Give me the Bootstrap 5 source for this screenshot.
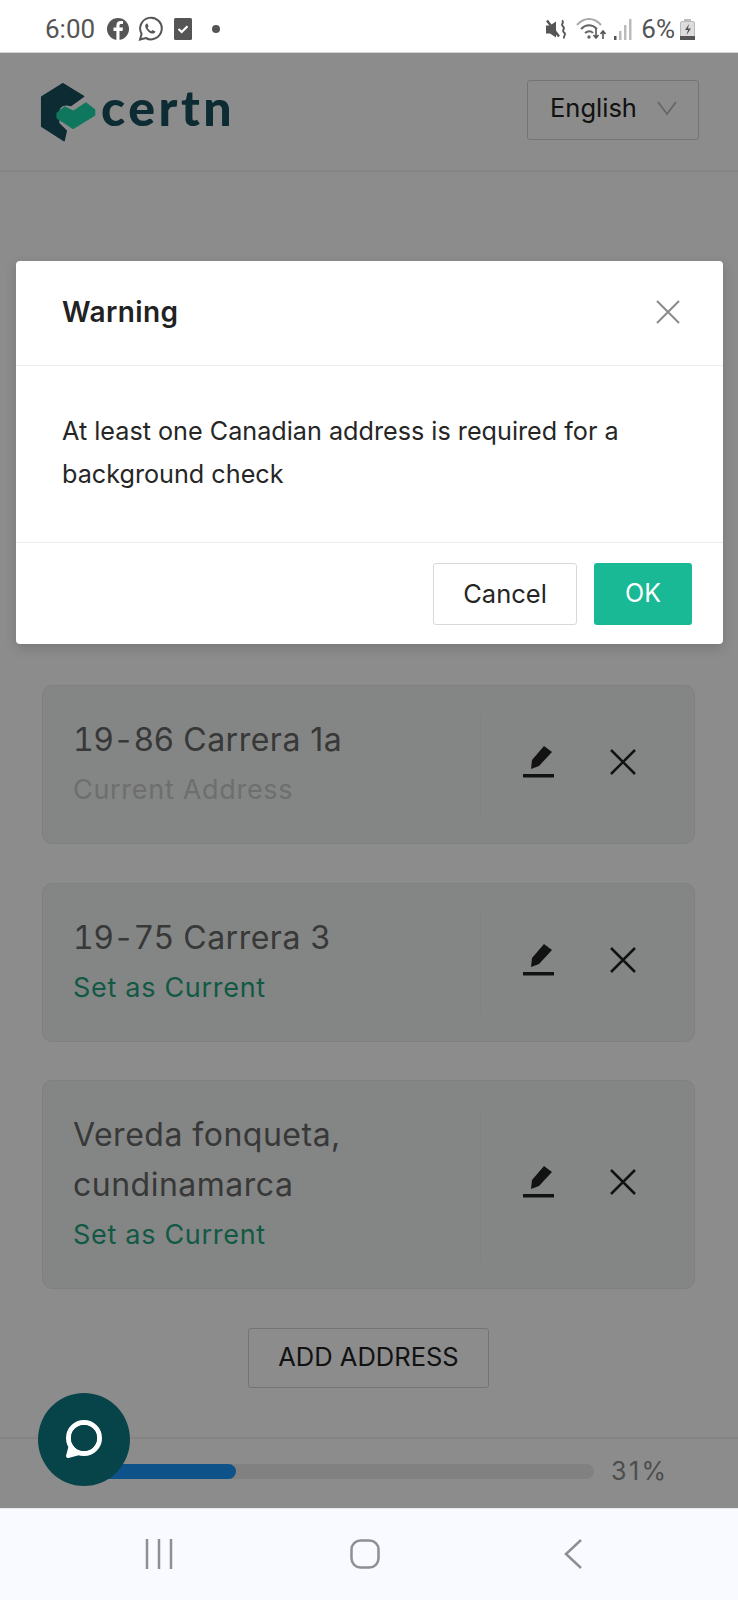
<!DOCTYPE html>
<html lang="en">
<head>
  <meta charset="UTF-8">
  <meta name="viewport" content="width=device-width, initial-scale=1">
  <title>Certn - Addresses</title>
  <link href="https://cdn.jsdelivr.net/npm/bootstrap@5.3.3/dist/css/bootstrap.min.css" rel="stylesheet">
  <style>
    body { font-family: Inter, "Liberation Sans", sans-serif; background: #fff; }
    .app-shell { width: 738px; height: 1600px; overflow: hidden; }
    .status-bar { height: 53px; padding: 6px 0 0 45px; background: #fff; border-bottom: 1px solid #d4d4d4; color: #555; font-family: Roboto, sans-serif; font-size: 26px; flex: none; }
    .status-bar svg { display: block; flex: none; }
    .page-area { height: 1455px; background: #fff; flex: none; }
    .site-head { height: 119px; padding: 27px 39px 0 38px; border-bottom: 2px solid #f1f1f1; }
    .logo-mark { margin-top: 2px; }
    .logo-word { font-family: Lato, sans-serif; font-weight: 900; font-size: 50px; letter-spacing: 3.500px; color: #194f5c; line-height: 58px; margin: -2px 0 0 5px; }
    .lang-select { width: 172px; height: 60px; border: 1px solid #d4d4d4; border-radius: 3px; padding: 0 21px 4px 22px; font-size: 25.500px; color: #222; }
    .addr-list { padding: 513px 43px 0 42px; }
    .addr-box { margin-bottom: 38.500px; padding: 29px 0 28px; border: 1px solid #e6e9e8; border-radius: 10px; background: #f1f4f3; }
    .addr-text { width: 437px; padding-left: 30px; line-height: 50px; font-size: 32px; letter-spacing: .5px; color: #666; }
    .addr-num { font-variant-numeric: tabular-nums; letter-spacing: -.6px; }
    .addr-note { font-size: 27px; letter-spacing: .7px; color: #c8c8c8; }
    .addr-set { font-size: 27px; letter-spacing: .7px; color: #1fa37e; }
    .addr-tools { border-left: 1px solid #e9ecea; padding-bottom: 6px; padding-left: 42px; }
    .add-btn { width: 241px; height: 60px; border: 1px solid #d4d4d4; border-radius: 3px; background: #fff; color: #222; font-size: 25.500px; padding: 0; }
    .progress-foot { position: absolute; left: 0; right: 0; bottom: 0; height: 71px; border-top: 2px solid #f0f0f0; padding: 25px 0 0 71px; }
    .progress-foot .progress { width: 523px; height: 15px; flex: none; background: #ebebeb; border-radius: 8px; }
    .progress-foot .progress-bar { background: #1b96fb; border-radius: 8px; }
    .pct-text { font-size: 25px; letter-spacing: 2.500px; color: #8c8c8c; margin-left: 17px; line-height: 15px; }
    .dim-layer { position: absolute; inset: 0; background: rgba(0, 0, 0, .45); }
    .warn-modal { position: absolute; left: 16px; top: 208px; width: 707px; height: 383px; background: #fff; border-radius: 4px; box-shadow: 0 4px 12px rgba(0, 0, 0, .15); }
    .warn-head { height: 105px; padding: 0 43px 2px 46px; border-bottom: 1px solid #ececec; font-size: 28px; font-weight: 600; letter-spacing: .4px; color: #222; }
    .warn-body { height: 177px; padding: 44px 46px 0; font-size: 25.200px; line-height: 43px; color: #262626; border-bottom: 1px solid #ececec; }
    .warn-foot { padding: 20px 31px 0 0; }
    .btn-cancel { width: 144px; height: 62px; border: 1px solid #d8d8d8; border-radius: 3px; background: #fff; font-size: 25.500px; color: #262626; padding: 0; }
    .btn-ok { width: 98px; height: 62px; border: 0; border-radius: 3px; background: #19b996; font-size: 25px; color: #fff; padding: 0; margin-left: 17px; }
    .chat-fab { position: absolute; left: 38px; bottom: 22px; width: 92px; height: 93px; border-radius: 50%; background: #07444a; }
    .soft-nav { height: 92px; background: #f8faff; border-top: 1px solid #e6e8ec; padding: 30px 0 0 145px; flex: none; }
    .nav-home { margin-left: 177px; }
    .nav-back { margin-left: 184px; }
  </style>
</head>

<body>
<div class="app-shell d-flex flex-column">

  <!-- phone status bar -->
  <div class="status-bar d-flex align-items-center">
    <span>6:00</span>
    <svg width="24" height="24" viewBox="0 0 24 24" style="margin-left:11px"><circle cx="12" cy="12" r="11" fill="#555"/><path d="M13.500 23v-9h3l.5-3.400h-3.500V8.700c0-1 .4-1.700 1.800-1.700H17V4.100c-.5-.1-1.400-.2-2.400-.2-2.500 0-4.200 1.500-4.200 4.300v2.400H7.500V14h2.900v9z" fill="#fff"/></svg>
    <svg width="26" height="26" viewBox="0 0 26 26" style="margin-left:7px"><path d="M3 23.500l1.600-5.600A10.800 10.800 0 1 1 8.800 22z" fill="none" stroke="#555" stroke-width="2"/><path d="M9.500 7.500c-1.500 1-1.800 3-.3 5.400 1.700 2.700 4 4.300 6 4.600 1.700.2 2.900-.8 3.200-2.100l-2.900-1.500-1.200 1.300c-1.500-.6-2.900-1.900-3.700-3.500l1-1.300-1.200-2.900z" fill="#555"/></svg>
    <svg width="18" height="22" viewBox="0 0 18 22" style="margin-left:11px"><rect width="18" height="22" rx="1.500" fill="#555"/><path d="M4.500 11l3.200 3 5.800-5.800" fill="none" stroke="#fff" stroke-width="2.200"/></svg>
    <svg width="8" height="8" viewBox="0 0 8 8" style="margin-left:20px"><circle cx="4" cy="4" r="4" fill="#555"/></svg>

    <svg class="ms-auto" width="21" height="21" viewBox="0 0 21 20"><path d="M0 6h4l6-4v16l-6-4H0z" fill="#555"/><path d="M1 1l12 16" stroke="#555" stroke-width="2.400"/><path d="M16 1c3 2-2 4 1 6s-2 4 1 6-1 3 0 6" fill="none" stroke="#555" stroke-width="1.800"/></svg>
    <svg width="31" height="22" viewBox="0 0 31 22" style="margin-left:9px"><path d="M1 7c7-8 17-8 24 0" fill="none" stroke="#aaa" stroke-width="2"/><path d="M5 11c5-5 11-5 16 0" fill="none" stroke="#666" stroke-width="2"/><path d="M9 15c3-2.500 6-2.500 8 0" fill="none" stroke="#666" stroke-width="2"/><circle cx="13" cy="19" r="1.700" fill="#666"/><path d="M20 11v9m-2.500-3l2.500 3 2.500-3" fill="none" stroke="#555" stroke-width="1.600"/><path d="M27 21v-8m-2.500 3l2.500-3 2.500 3" fill="none" stroke="#555" stroke-width="1.600"/></svg>
    <svg width="18" height="21" viewBox="0 0 18 21" style="margin-left:7px"><rect x="0" y="17" width="2.500" height="4" fill="#555"/><rect x="5" y="12" width="2.500" height="9" fill="#bbb"/><rect x="10" y="6" width="2.500" height="15" fill="#bbb"/><rect x="15" y="0" width="2.500" height="21" fill="#bbb"/></svg>
    <span style="margin-left:9px">6%</span>
    <svg width="15" height="21" viewBox="0 0 15 21" style="margin-left:5px"><rect x="4" y="0" width="7" height="3" fill="#bbb"/><rect x="0.500" y="2.500" width="14" height="18" rx="1.500" fill="#ddd" stroke="#bbb"/><rect x="0" y="17" width="15" height="4" fill="#555"/><path d="M9 5l-4 6h3l-1.500 5 4.500-6.500H8z" fill="#555"/></svg>
    <span style="width:43px"></span>
  </div>

  <!-- page behind the dialog -->
  <div class="page-area position-relative">
    <div class="site-head d-flex justify-content-between">
      <div class="d-flex align-items-start">
        <svg class="logo-mark" width="58" height="60" viewBox="113 245 167 172"><path d="M184 250l60 36-36 26c-18-6-32 0-36 14l0 38 22 21-6 28-64-41V288z" fill="#194f5c" stroke="#194f5c" stroke-width="5" stroke-linejoin="round"/><path d="M168 335l22-18 25 12 36-24 25 20v15l-62 38-46-30z" fill="#1dd9ab" stroke="#1dd9ab" stroke-width="4" stroke-linejoin="round"/></svg>
        <span class="logo-word">certn</span>
      </div>
      <div class="lang-select d-flex align-items-center justify-content-between">
        <span>English</span>
        <svg width="20" height="14" viewBox="0 0 20 14"><path d="M1 1l9 12 9-12" fill="none" stroke="#bbb" stroke-width="1.800"/></svg>
      </div>
    </div>

    <div class="addr-list">
      <div class="addr-box d-flex">
        <div class="addr-text"><span class="addr-num">19-86</span> Carrera 1a<div class="addr-note">Current Address</div></div>
        <div class="addr-tools d-flex align-items-center">
          <svg width="31" height="32" viewBox="0 0 31 32"><path d="M8 23l1-9L21 0l8 6-13 14z" fill="#222"/><rect y="28" width="31" height="3.500" fill="#222"/></svg>
          <svg width="26" height="26" viewBox="0 0 26 26" style="margin-left:56px"><path d="M1 1l24 24M25 1L1 25" stroke="#222" stroke-width="2.500"/></svg>
        </div>
      </div>
      <div class="addr-box d-flex">
        <div class="addr-text"><span class="addr-num">19-75</span> Carrera 3<div class="addr-set">Set as Current</div></div>
        <div class="addr-tools d-flex align-items-center">
          <svg width="31" height="32" viewBox="0 0 31 32"><path d="M8 23l1-9L21 0l8 6-13 14z" fill="#222"/><rect y="28" width="31" height="3.500" fill="#222"/></svg>
          <svg width="26" height="26" viewBox="0 0 26 26" style="margin-left:56px"><path d="M1 1l24 24M25 1L1 25" stroke="#222" stroke-width="2.500"/></svg>
        </div>
      </div>
      <div class="addr-box d-flex">
        <div class="addr-text">Vereda fonqueta,<br>cundinamarca<div class="addr-set">Set as Current</div></div>
        <div class="addr-tools d-flex align-items-center">
          <svg width="31" height="32" viewBox="0 0 31 32"><path d="M8 23l1-9L21 0l8 6-13 14z" fill="#222"/><rect y="28" width="31" height="3.500" fill="#222"/></svg>
          <svg width="26" height="26" viewBox="0 0 26 26" style="margin-left:56px"><path d="M1 1l24 24M25 1L1 25" stroke="#222" stroke-width="2.500"/></svg>
        </div>
      </div>
      <div class="text-center"><button class="add-btn" type="button">ADD ADDRESS</button></div>
    </div>

    <div class="progress-foot d-flex align-items-start">
      <div class="progress"><div class="progress-bar" style="width: 31.5%"></div></div>
      <span class="pct-text">31%</span>
    </div>

    <div class="dim-layer"></div>

    <div class="warn-modal">
      <div class="warn-head d-flex align-items-center justify-content-between">
        <span>Warning</span>
        <svg width="24" height="24" viewBox="0 0 24 24"><path d="M1 1l22 22M23 1L1 23" stroke="#8a8a8a" stroke-width="2"/></svg>
      </div>
      <div class="warn-body">At least one Canadian address is required for a background check</div>
      <div class="warn-foot d-flex justify-content-end">
        <button class="btn-cancel" type="button">Cancel</button>
        <button class="btn-ok" type="button">OK</button>
      </div>
    </div>

    <div class="chat-fab">
      <svg width="92" height="93" viewBox="0 0 92 93"><circle cx="46" cy="45" r="15.500" fill="none" stroke="#fff" stroke-width="5"/><path d="M33 52l-3 11 11-3" fill="#fff" stroke="#fff" stroke-width="4" stroke-linejoin="round"/><circle cx="46" cy="45" r="13" fill="#07444a"/></svg>
    </div>
  </div>

  <!-- phone soft keys -->
  <div class="soft-nav d-flex align-items-start">
    <svg width="28" height="30" viewBox="0 0 28 30"><path d="M2 0v30M14 0v30M26 0v30" stroke="#8c8f94" stroke-width="2.500"/></svg>
    <svg class="nav-home" width="30" height="30" viewBox="0 0 30 30"><rect x="1.500" y="1.500" width="27" height="27" rx="9" fill="none" stroke="#8c8f94" stroke-width="2.500"/></svg>
    <svg class="nav-back" width="18" height="30" viewBox="0 0 18 30"><path d="M17 1L2 15l15 14" fill="none" stroke="#8c8f94" stroke-width="2.500"/></svg>
  </div>
</div>

<script src="https://cdn.jsdelivr.net/npm/bootstrap@5.3.3/dist/js/bootstrap.bundle.min.js"></script>
</body>
</html>
